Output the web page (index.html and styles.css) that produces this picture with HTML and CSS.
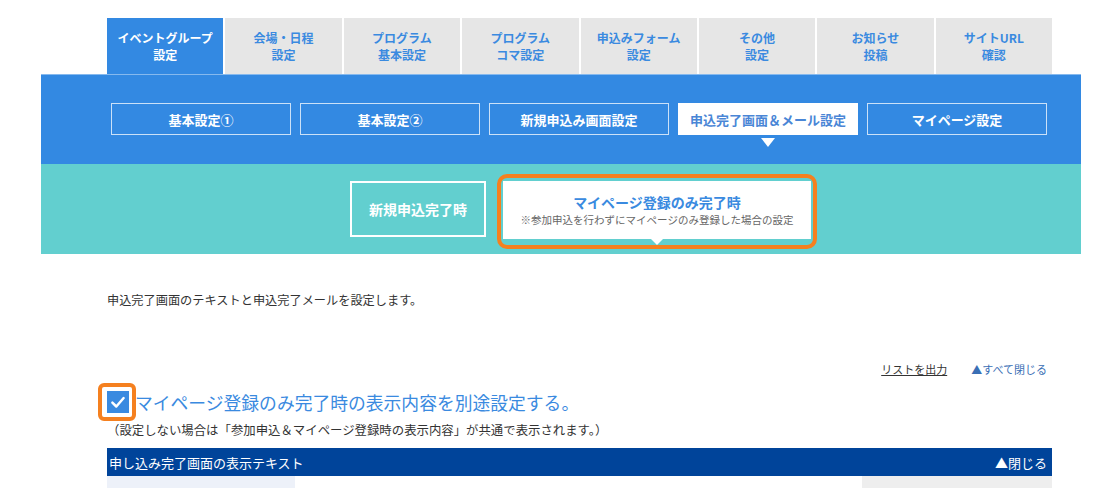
FILE: index.html
```html
<!DOCTYPE html>
<html lang="ja">
<head>
  <meta charset="UTF-8" />
  <meta name="viewport" content="width=device-width, initial-scale=1.0"/>
  <title>申込完了画面＆メール設定</title>
  <link rel="stylesheet" href="styles.css">
</head>
<body>

  <div class="page">

    <!-- タブ -->
    <ul class="tabs">
      <li class="tab activo">イベントグループ<br>設定</li>
      <li class="tab">会場・日程<br>設定</li>
      <li class="tab">プログラム<br>基本設定</li>
      <li class="tab">プログラム<br>コマ設定</li>
      <li class="tab">申込みフォーム<br>設定</li>
      <li class="tab">その他<br>設定</li>
      <li class="tab">お知らせ<br>投稿</li>
      <li class="tab">サイトURL<br>確認</li>
    </ul>

    <div class="band-blue">
      <nav class="subnav">
        <a href="#">基本設定①</a>
        <a href="#">基本設定②</a>
        <a href="#">新規申込み画面設定</a>
        <a href="#" class="activo">申込完了画面＆メール設定</a>
        <a href="#">マイページ設定</a>
      </nav>
    </div>

    <div class="band-teal">
      <div class="modes">
        <a href="#" class="mode">新規申込完了時</a>
        <a href="#" class="mode activo">
          <span class="mode-title">マイページ登録のみ完了時</span>
          <span class="mode-sub">※参加申込を行わずにマイページのみ登録した場合の設定</span>
        </a>
      </div>
    </div>

    <div class="content">
      <p class="lead">申込完了画面のテキストと申込完了メールを設定します。</p>

      <div class="tools">
        <a href="#" class="tool-link">リストを出力</a>
        <a href="#" class="tool-close">▲すべて閉じる</a>
      </div>

      <label class="option">
        <span class="check">
          <svg width="18" height="18" viewBox="0 0 16 16"><path d="M3 8.5 L6.5 12 L13 4.5" fill="none" stroke="#fff" stroke-width="2.2" stroke-linecap="round" stroke-linejoin="round"/></svg>
        </span>
        <span class="option-text">マイページ登録のみ完了時の表示内容を別途設定する。</span>
      </label>
      <p class="note">（設定しない場合は「参加申込＆マイページ登録時の表示内容」が共通で表示されます。）</p>

      <div class="panel">
        <div class="panel-head">
          <span>申し込み完了画面の表示テキスト</span>
          <span>▲閉じる</span>
        </div>
        <div class="panel-row">
          <div class="cell-label"></div>
          <div class="cell-body"></div>
          <div class="cell-side"></div>
        </div>
      </div>
    </div>

  </div>

</body>
</html>
```

FILE: styles.css
```css
   body {
     font-family: "Noto Sans CJK JP", "Noto Sans", sans-serif;
     background-color: #fff;
     margin: 0;
     color: #333;
   }

   a {
     text-decoration: none;
   }

   .page {
     width: 1040px;
     margin-left: 41px;
   }

   /* ========== タブ ========== */
   .tabs {
     display: flex;
     gap: 2px;
     list-style: none;
     margin: 0 0 0 66px;
     padding: 18px 0 0;
     width: 945px;
   }

   .tab {
     flex: 1;
     height: 56px;
     display: flex;
     align-items: center;
     justify-content: center;
     text-align: center;
     background-color: #e6e6e6;
     color: #3a8ae0;
     font-size: 12px;
     font-weight: bold;
     line-height: 17px;
   }

   .tab.activo {
     background-color: #3389e2;
     color: #fff;
   }

   /* ========== サブナビ ========== */
   .band-blue {
     background-color: #3389e2;
     border-top: 1px solid #86b9ee;
     height: 90px;
     box-sizing: border-box;
     padding: 28px 0 0 70px;
   }

   .subnav {
     display: flex;
     gap: 9px;
   }

   .subnav a {
     position: relative;
     width: 180px;
     height: 32px;
     box-sizing: border-box;
     border: 1px solid rgba(255, 255, 255, 0.75);
     display: flex;
     align-items: center;
     justify-content: center;
     color: #fff;
     font-size: 13px;
     font-weight: bold;
   }

   .subnav a.activo {
     background-color: #fff;
     color: #4a86d6;
     border-color: #fff;
   }

   .subnav a.activo::after {
     content: "";
     position: absolute;
     top: 34px;
     left: 50%;
     margin-left: -7px;
     border-left: 7px solid transparent;
     border-right: 7px solid transparent;
     border-top: 9px solid #fff;
   }

   /* ========== モード ========== */
   .band-teal {
     background-color: #62cfcf;
     height: 90px;
     display: flex;
     align-items: center;
     padding-left: 309px;
   }

   .modes {
     display: flex;
     align-items: center;
     gap: 17px;
   }

   .mode {
     width: 136px;
     height: 56px;
     box-sizing: border-box;
     border: 2px solid #fff;
     display: flex;
     align-items: center;
     justify-content: center;
     color: #fff;
     font-size: 14px;
     font-weight: bold;
   }

   .mode.activo {
     position: relative;
     width: 308px;
     height: 58px;
     margin-top: 1px;
     border: none;
     background-color: #fff;
     flex-direction: column;
     gap: 2px;
   }

   .mode.activo::before {
     content: "";
     position: absolute;
     top: -7px;
     left: -6px;
     right: -6px;
     bottom: -10px;
     border: 4px solid #f5801f;
     border-radius: 10px;
   }

   .mode.activo::after {
     content: "";
     position: absolute;
     top: 58px;
     left: 50%;
     margin-left: -6px;
     border-left: 6px solid transparent;
     border-right: 6px solid transparent;
     border-top: 6px solid #fff;
   }

   .mode-title {
     color: #3a8ae0;
     font-size: 14px;
     line-height: 18px;
   }

   .mode-sub {
     color: #666;
     font-size: 10.5px;
     font-weight: normal;
     line-height: 14px;
   }

   /* ========== 本文 ========== */
   .content {
     width: 945px;
     margin-left: 66px;
   }

   .lead {
     margin: 0;
     padding-top: 38px;
     font-size: 12.2px;
     line-height: 16px;
   }

   .tools {
     display: flex;
     justify-content: flex-end;
     gap: 24px;
     margin-top: 53px;
     padding-right: 5px;
     font-size: 11px;
     line-height: 16px;
   }

   .tool-link {
     color: #333;
     text-decoration: underline;
   }

   .tool-close {
     color: #3a6fb5;
   }

   .option {
     display: flex;
     align-items: center;
     gap: 6px;
     margin-top: 14px;
     height: 22px;
   }

   .check {
     position: relative;
     width: 22px;
     height: 22px;
     background-color: #3a8ae0;
     display: flex;
     align-items: center;
     justify-content: center;
   }

   .check::after {
     content: "";
     position: absolute;
     top: -8px;
     left: -9px;
     width: 30px;
     height: 30px;
     border: 4px solid #f5801f;
     border-radius: 6px;
   }

   .option-text {
     color: #3a8ae0;
     font-size: 17.8px;
     line-height: 22px;
   }

   .note {
     margin: 9px 0 0;
     font-size: 12.4px;
     line-height: 16px;
   }

   .panel {
     margin-top: 10px;
   }

   .panel-head {
     display: flex;
     justify-content: space-between;
     align-items: center;
     height: 28px;
     padding: 0 5px 0 2px;
     background-color: #00449a;
     color: #fff;
     font-size: 13px;
   }

   .panel-row {
     display: flex;
     height: 40px;
   }

   .cell-label {
     width: 188px;
     background-color: #edf1f9;
   }

   .cell-body {
     flex: 1;
   }

   .cell-side {
     width: 190px;
     background-color: #eeeeee;
   }
```
